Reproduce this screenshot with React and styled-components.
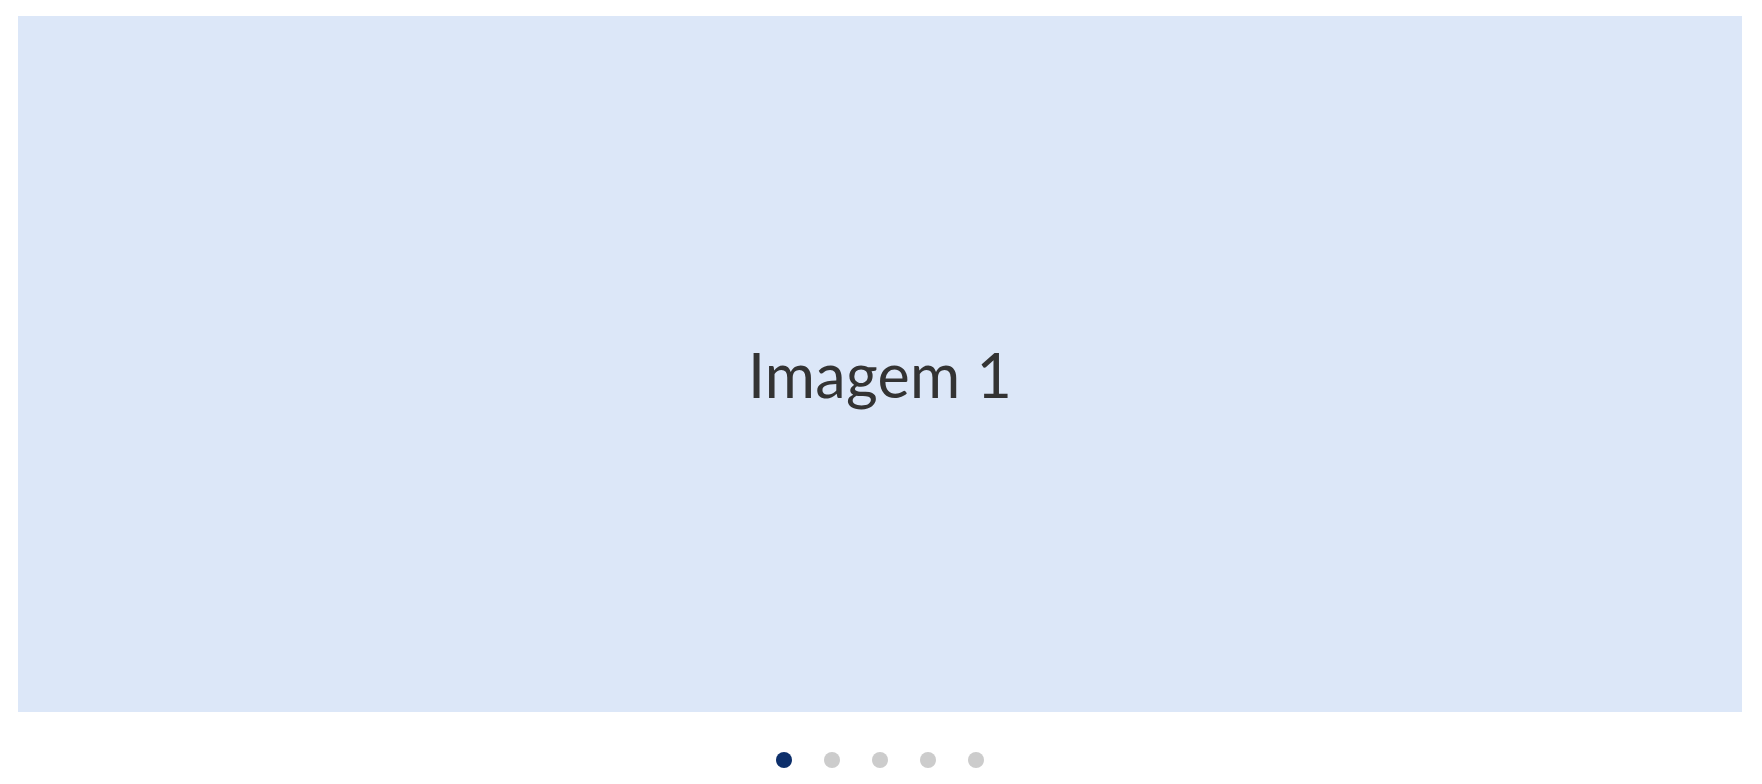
import React, { useState } from "react";
import styled, { createGlobalStyle } from "styled-components";

const GlobalStyle = createGlobalStyle`
  body {
    margin: 0;
    background: #ffffff;
    font-family: Lato, "Open Sans", sans-serif;
  }
`;

const Carousel = styled.div`
  padding: 16px 20px 0 18px;
  display: flex;
  flex-direction: column;
  align-items: center;
`;

const Slide = styled.div`
  width: 100%;
  height: 696px;
  background: #dce7f8;
  display: flex;
  align-items: center;
  justify-content: center;
`;

const SlideText = styled.span`
  font-size: 61px;
  color: #333333;
  padding-top: 21px;
  letter-spacing: 0.3px;
`;

const Dots = styled.div`
  display: flex;
  gap: 32px;
  margin-top: 40px;
`;

const Dot = styled.button`
  width: 16px;
  height: 16px;
  border-radius: 50%;
  border: none;
  padding: 0;
  cursor: pointer;
  background: ${(props) => (props.$active ? "#0d2f6b" : "#cccccc")};
`;

const slides = ["Imagem 1", "Imagem 2", "Imagem 3", "Imagem 4", "Imagem 5"];

const App = () => {
  const [current, setCurrent] = useState(0);

  return (
    <>
      <GlobalStyle />
      <Carousel>
        <Slide>
          <SlideText>{slides[current]}</SlideText>
        </Slide>
        <Dots>
          {slides.map((s, i) => (
            <Dot key={s} $active={i === current} onClick={() => setCurrent(i)} />
          ))}
        </Dots>
      </Carousel>
    </>
  );
};

export default App;
